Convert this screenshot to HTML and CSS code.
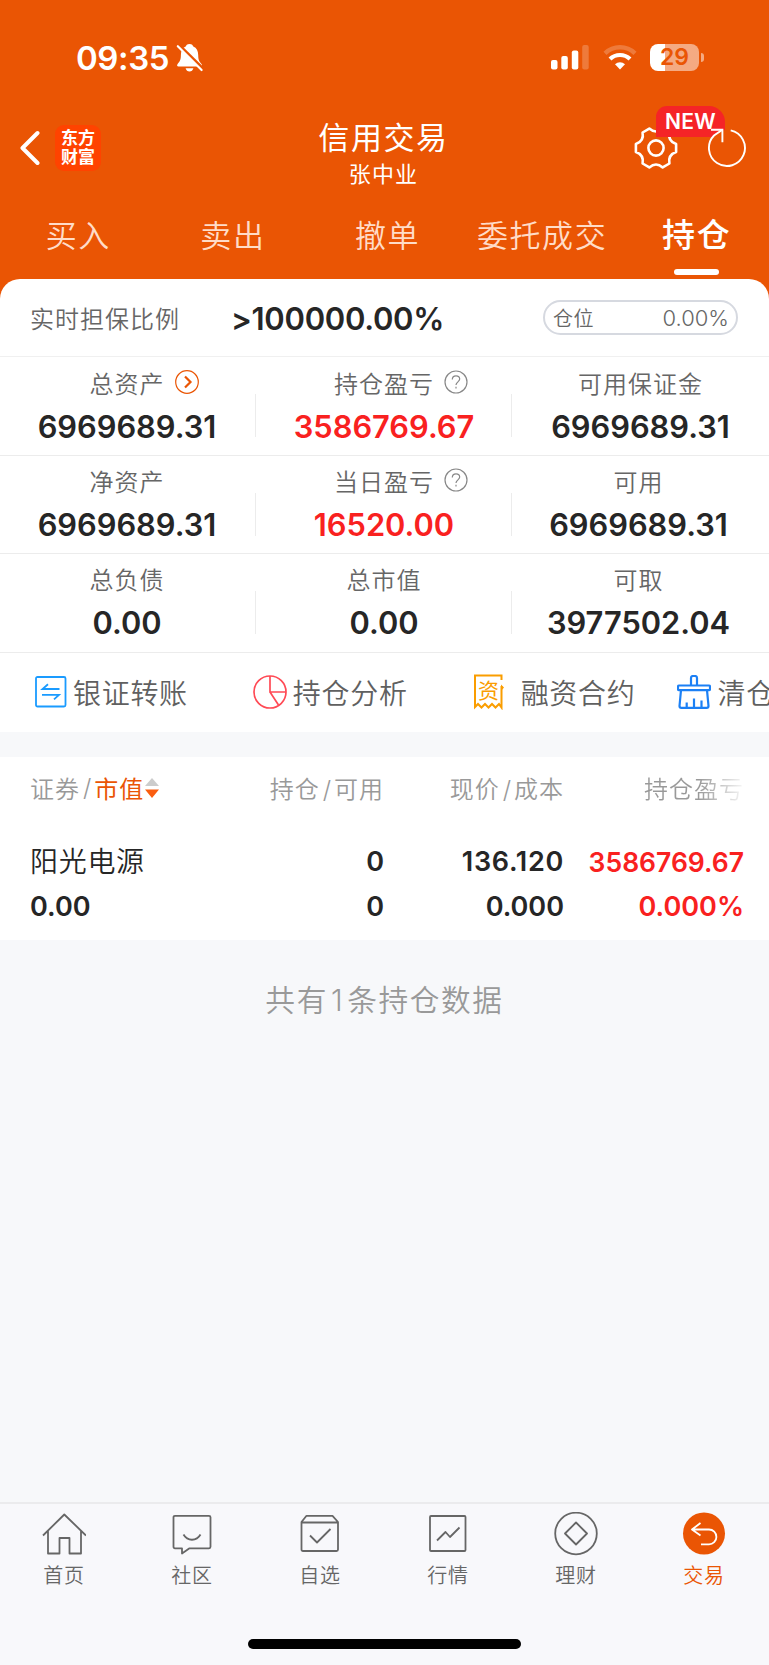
FILE: index.html
```html
<!DOCTYPE html>
<html lang="zh-CN">
<head>
    <meta charset="UTF-8">
    <meta name="viewport" content="width=device-width, initial-scale=1.0">
    <title>信用交易</title>
    <link rel="stylesheet" href="styles.css">
</head>
<body>
    <header>
        <div class="status-bar">
            <div class="status-left">
                <span class="time">09:35</span>
                <svg class="bell" width="28" height="30" viewBox="0 0 28 30">
                    <path d="M13.5 1c-2.4 0-3.4 1.5-3.8 2.4C6.3 4.8 4.9 8 4.9 12c0 5.600-1.600 6.800-3.400 9.200-.8 1.200-.4 2.300 1 2.300h22.200c1.400 0 1.700-1.100.9-2.300-1.900-2.400-3.400-3.600-3.400-9.200 0-4-1.500-7.200-4.900-8.600C16.900 2.500 15.900 1 13.500 1zM9.600 25.200c.5 2 2 3.300 3.900 3.300s3.400-1.300 3.900-3.300z" fill="#fff"/>
                    <path d="M3.300 2.200L28 26.600" stroke="#ea5504" stroke-width="3"/>
                    <path d="M1.800 3.200L25.600 27" stroke="#fff" stroke-width="2.200" stroke-linecap="round"/>
                </svg>
            </div>
            <div class="status-right">
                <svg width="38" height="25" viewBox="0 0 38 25" fill="#fff">
                    <rect x="0" y="15" width="6.500" height="9.500" rx="2"/>
                    <rect x="10.300" y="11" width="6.500" height="13.500" rx="2"/>
                    <rect x="20.800" y="5.500" width="6.500" height="19" rx="2"/>
                    <rect x="31.200" y="0" width="6.500" height="24.500" rx="2" opacity=".22"/>
                </svg>
                <svg class="wifi" width="34" height="25" viewBox="0 0 34 25" fill="none">
                    <path d="M2 8.400a21.500 21.500 0 0 1 30 0" stroke="#fff" stroke-width="4.400" opacity=".22"/>
                    <path d="M7 14a14.500 14.500 0 0 1 20 0" stroke="#fff" stroke-width="4.200"/>
                    <path d="M17 24.500l-5-5.200a7.300 7.300 0 0 1 10 0z" fill="#fff"/>
                </svg>
                <div class="battery"><span>29</span></div>
                <i class="battery-tip"></i>
            </div>
        </div>

        <div class="nav-bar">
            <div class="nav-left">
                <svg width="20" height="36" viewBox="0 0 20 36" fill="none" stroke="#fff" stroke-width="4" stroke-linecap="round" stroke-linejoin="round">
                    <path d="M17.500 3L2.500 18l15 15"/>
                </svg>
                <div class="logo">东方<br>财富</div>
            </div>
            <div class="nav-title">
                <h1>信用交易</h1>
                <p>张中业</p>
            </div>
            <div class="nav-right">
                <div class="settings">
                    <svg width="44" height="44" viewBox="-22 -22 44 44" fill="none" stroke="#fff" stroke-width="2.600" stroke-linejoin="round">
                        <path d="M20.100 3.900Q11.800 6.800 13.400 15.500L6.700 19.400Q0 13.600-6.700 19.400L-13.400 15.500Q-11.800 6.800-20.100 3.900V-3.900Q-11.800-6.800-13.400-15.500L-6.700-19.400Q0-13.600 6.700-19.400L13.400-15.500Q11.800-6.800 20.100-3.900Z"/>
                        <circle r="7.600"/>
                    </svg>
                    <span class="badge">NEW</span>
                </div>
                <svg class="refresh" width="40" height="42" viewBox="0 0 40 42" fill="none" stroke="#fff" stroke-width="1.900">
                    <circle cx="20" cy="21" r="18" fill="#ea5504" stroke="none"/>
                    <path d="M23.700 3.400A18 18 0 1 1 7 8.500L15.400 2.700"/>
                    <path d="M4 2.700h11.400v12.500"/>
                </svg>
            </div>
        </div>

        <nav class="tabs">
            <a>买入</a>
            <a>卖出</a>
            <a>撤单</a>
            <a>委托成交</a>
            <a class="active">持仓</a>
        </nav>
    </header>

    <main>
        <section class="assets">
            <div class="ratio">
                <span class="ratio-label">实时担保比例</span>
                <strong>&gt;100000.00%</strong>
                <div class="pill"><span>仓位</span><span class="pill-num">0.00%</span></div>
            </div>
            <div class="row top">
                <div class="cell">
                    <div class="label">总资产
                        <svg width="24" height="24" viewBox="0 0 24 24" fill="none" stroke="#ea5504"><circle cx="12" cy="12" r="11.300" stroke-width="1.200"/><path d="M10 6.500l5.500 5.500-5.500 5.500" stroke-width="2.200"/></svg>
                    </div>
                    <div class="value">6969689.31</div>
                </div>
                <div class="cell">
                    <div class="label">持仓盈亏
                        <svg width="24" height="24" viewBox="0 0 24 24" fill="none" stroke="#888" stroke-width="1.200"><circle cx="12" cy="12" r="11"/><path d="M8.300 9.500c0-2.200 1.600-3.700 3.700-3.700s3.700 1.400 3.700 3.300c0 2.700-3.700 2.900-3.700 6"/><path d="M12 16.800v1.800"/></svg>
                    </div>
                    <div class="value red">3586769.67</div>
                </div>
                <div class="cell">
                    <div class="label">可用保证金</div>
                    <div class="value">6969689.31</div>
                </div>
            </div>
            <div class="row">
                <div class="cell">
                    <div class="label">净资产</div>
                    <div class="value">6969689.31</div>
                </div>
                <div class="cell">
                    <div class="label">当日盈亏
                        <svg width="24" height="24" viewBox="0 0 24 24" fill="none" stroke="#888" stroke-width="1.200"><circle cx="12" cy="12" r="11"/><path d="M8.300 9.500c0-2.200 1.600-3.700 3.700-3.700s3.700 1.400 3.700 3.300c0 2.700-3.700 2.900-3.700 6"/><path d="M12 16.800v1.800"/></svg>
                    </div>
                    <div class="value red">16520.00</div>
                </div>
                <div class="cell">
                    <div class="label">可用</div>
                    <div class="value">6969689.31</div>
                </div>
            </div>
            <div class="row">
                <div class="cell">
                    <div class="label">总负债</div>
                    <div class="value">0.00</div>
                </div>
                <div class="cell">
                    <div class="label">总市值</div>
                    <div class="value">0.00</div>
                </div>
                <div class="cell">
                    <div class="label">可取</div>
                    <div class="value">3977502.04</div>
                </div>
            </div>
            <div class="actions">
                <a>
                    <svg width="32" height="32" viewBox="0 0 32 32" fill="none" stroke="#1a9bff" stroke-width="1.800">
                        <rect x="1" y="1" width="29.500" height="29.500" rx="1.500"/>
                        <path d="M24.500 13H7.500l5.500-4.800M7 18.800h17l-5 4.600"/>
                    </svg>
                    银证转账
                </a>
                <a>
                    <svg width="34" height="34" viewBox="0 0 34 34" fill="none" stroke="#ff4a55" stroke-width="1.700">
                        <circle cx="17" cy="17" r="16"/>
                        <path d="M17 1v16h16M17 17l8.500 13"/>
                    </svg>
                    持仓分析
                </a>
                <a>
                    <svg width="32" height="36" viewBox="0 0 32 36" fill="none" stroke="#fa9d00" stroke-width="2">
                        <path d="M28.500 6V1.500H2V33l3-3 3.500 3.500L12 30l3.500 3.500L19 30l3.500 3.500L26 30l2.500 3.500V12"/>
                        <path d="M28 10.500l3 3-3 3.500z" fill="#fa9d00" stroke="none"/>
                        <text x="15.500" y="23.500" text-anchor="middle" font-size="21" font-weight="400" letter-spacing="0" fill="#fa9d00" stroke="none">资</text>
                    </svg>
                    融资合约
                </a>
                <a>
                    <svg width="34" height="34" viewBox="0 0 34 34" fill="none" stroke="#1c80f5" stroke-width="2.200" stroke-linejoin="round">
                        <path d="M14 10.500V3q0-2 2-2h2q2 0 2 2v7.500"/>
                        <rect x="1" y="10.500" width="32" height="4.600" rx="1"/>
                        <path d="M4 15.100L2.500 31q0 1.800 1.800 1.800h25.400q1.800 0 1.800-1.800L30 15.100M9.700 32.500v-5M17 32.500v-9M24.500 32.500v-7"/>
                    </svg>
                    清仓
                </a>
            </div>
        </section>

        <section class="holdings">
            <div class="line head">
                <span>证券<i>/</i><b>市值</b><svg width="16" height="22" viewBox="0 0 16 22"><path d="M8 1l7 8H1z" fill="#ccc"/><path d="M1 12.500h14l-7 8.500z" fill="#fa5d10"/></svg></span>
                <span>持仓<i>/</i>可用</span>
                <span>现价<i>/</i>成本</span>
                <span class="fade">持仓盈亏</span>
            </div>
            <div class="line first">
                <span class="name">阳光电源</span>
                <span>0</span>
                <span class="price">136.120</span>
                <span class="red profit">3586769.67</span>
            </div>
            <div class="line">
                <span>0.00</span>
                <span>0</span>
                <span>0.000</span>
                <span class="red">0.000%</span>
            </div>
        </section>
        <p class="total">共有<i>1</i>条持仓数据</p>
    </main>

    <footer>
        <div class="tab-bar">
            <a>
                <svg viewBox="0 0 44 44"><path d="M1 23.500L22.300 2.500 44 23.500M6 19v22.500h11.500V26h10v15.500H39V19"/></svg>
                首页
            </a>
            <a>
                <svg viewBox="0 0 44 44"><path d="M5 3.800h34q1.500 0 1.500 1.500v29.500q0 1.500-1.500 1.500H19.500L12 41.500v-5.200H5q-1.500 0-1.500-1.500V5.300q0-1.500 1.500-1.500zM13.500 22.500c4 7 13 7 17 0"/></svg>
                社区
            </a>
            <a>
                <svg viewBox="0 0 44 44"><path d="M3.500 10l5-6.200h26L40 10v27.500q0 1.500-1.500 1.500H5q-1.500 0-1.500-1.500zM3.500 10.500H40M12 23.500l7 7 13.500-13.500"/></svg>
                自选
            </a>
            <a>
                <svg viewBox="0 0 44 44"><rect x="4" y="4" width="35.500" height="35" rx="1"/><path d="M11 28.500l8.500-8.500 4.500 5 9.500-9.500"/></svg>
                行情
            </a>
            <a>
                <svg viewBox="0 0 44 44"><circle cx="22" cy="21.500" r="20.800"/><path d="M22 10.500l11 11-11 11-11-11z"/></svg>
                理财
            </a>
            <a class="active">
                <svg viewBox="0 0 44 44"><circle cx="22" cy="21.500" r="21" fill="#ea5504" stroke="none"/><path d="M18.500 11l-8.500 6.500 8.500 6M10.500 17.500H27a7.200 7.200 0 0 1 0 14.800h-8" stroke="#fff"/></svg>
                交易
            </a>
        </div>
        <div class="home-indicator"></div>
    </footer>
</body>
</html>
```

FILE: styles.css
```css
* {
    margin: 0;
    padding: 0;
    box-sizing: border-box;
}

body {
    width: 769px;
    height: 1665px;
    display: flex;
    flex-direction: column;
    overflow: hidden;
    background: #f7f8fa;
    color: #262626;
    font-family: Inter, "Noto Sans CJK SC", sans-serif;
    font-weight: 350;
}

svg {
    display: block;
    flex: none;
}

i {
    font-style: normal;
}

/* Header */
header {
    height: 279px;
    background: #ea5504;
    color: #fff;
}

.status-bar {
    height: 95px;
    padding: 20px 65px 0 76px;
    display: flex;
    justify-content: space-between;
    align-items: center;
}

.status-left,
.status-right {
    display: flex;
    align-items: center;
}

.time {
    width: 100px;
    font-size: 33px;
    font-weight: 600;
    letter-spacing: -0.4px;
}

.wifi {
    margin: 0 13px 0 14px;
}

.battery {
    width: 49px;
    height: 27px;
    border-radius: 8px;
    background: linear-gradient(90deg, #fff 15px, rgba(255, 255, 255, 0.5) 15px);
    color: #ea5504;
    font-size: 23px;
    font-weight: 600;
    line-height: 27px;
    text-align: center;
}

.battery-tip {
    width: 3px;
    height: 9px;
    margin-left: 2px;
    border-radius: 0 4px 4px 0;
    background: rgba(255, 255, 255, 0.5);
}

.nav-bar {
    height: 105px;
    padding: 0 22px 0 20px;
    display: grid;
    grid-template-columns: 1fr auto 1fr;
}

.nav-left {
    display: flex;
    align-items: center;
    gap: 15px;
}

.logo {
    width: 46px;
    height: 46px;
    padding-top: 4px;
    border-radius: 9px;
    background: #ff4300;
    font-size: 17px;
    font-weight: 700;
    line-height: 19px;
    text-align: center;
}

.nav-title {
    padding-top: 20px;
    text-align: center;
}

.nav-title h1 {
    font-size: 31px;
    font-weight: 400;
    line-height: 45px;
    letter-spacing: 1.6px;
}

.nav-title p {
    font-size: 22px;
    font-weight: 400;
    line-height: 28px;
    letter-spacing: 1.2px;
}

.nav-right {
    display: flex;
    justify-content: flex-end;
    align-items: center;
    gap: 29px;
}

.settings {
    position: relative;
}

.badge {
    position: absolute;
    left: 22px;
    top: -20px;
    width: 69px;
    height: 31px;
    border-radius: 11px 16px 8px 0;
    background: #f52427;
    font-size: 21px;
    font-weight: 600;
    line-height: 31px;
    letter-spacing: 0.3px;
    text-align: center;
}

.refresh {
    position: relative;
}

.tabs {
    height: 79px;
    margin-right: -4px;
    display: flex;
    font-size: 31px;
    letter-spacing: 1.6px;
    color: #ffdcc8;
}

.tabs a {
    flex: 1;
    padding-left: 2px;
    display: flex;
    flex-direction: column;
    align-items: center;
    line-height: 71px;
}

.tabs .active {
    color: #fff;
    font-size: 33px;
    font-weight: 500;
}

.tabs .active::after {
    content: "";
    width: 45px;
    height: 6px;
    margin-top: -2px;
    border-radius: 3px;
    background: #fff;
}

/* Assets */
main {
    flex: 1;
    background: linear-gradient(#ea5504 40px, #f7f8fa 40px);
}

.assets {
    height: 453px;
    border-radius: 20px 20px 0 0;
    background: #fff;
    overflow: hidden;
}

.ratio {
    height: 78px;
    padding: 0 31px 0 30px;
    display: flex;
    align-items: center;
    border-bottom: 1px solid #f0f0f0;
}

.ratio-label {
    width: 201px;
    font-size: 24px;
    letter-spacing: 1px;
    color: #666;
}

.ratio strong {
    flex: 1;
    padding-top: 2px;
    font-size: 31px;
    font-weight: 600;
    letter-spacing: -0.3px;
}

.pill {
    width: 195px;
    height: 35px;
    padding: 0 7px 0 8px;
    display: flex;
    justify-content: space-between;
    align-items: center;
    border: 2px solid #d6d9e0;
    border-radius: 18px;
    font-size: 20px;
    letter-spacing: 0.6px;
    color: #666;
}

.pill-num {
    font-size: 22px;
    letter-spacing: 0;
}

.row {
    height: 98.6px;
    display: grid;
    grid-template-columns: 256px 256px 1fr;
    border-bottom: 1px solid #ececec;
}

.cell {
    padding-top: 9px;
    display: flex;
    flex-direction: column;
    align-items: center;
    background: linear-gradient(#ececec, #ececec) no-repeat right 37px / 1px 43px;
}

.cell:first-child {
    padding-right: 2px;
}

.cell:last-child {
    padding-right: 4px;
    background: none;
}

.top .cell {
    padding-top: 10px;
}

.top .cell:last-child {
    padding-right: 0;
}

.label {
    position: relative;
    font-size: 24px;
    line-height: 36px;
    letter-spacing: 1px;
    color: #666;
}

.label svg {
    position: absolute;
    left: calc(100% + 10px);
    top: 3px;
}

.value {
    font-size: 30.8px;
    font-weight: 600;
    line-height: 48px;
}

.red {
    color: #f9211f;
}

.actions {
    height: 78px;
    padding-left: 35px;
    display: flex;
    align-items: center;
    gap: 65px;
    font-size: 28px;
    letter-spacing: 0.7px;
    color: #606060;
    white-space: nowrap;
}

.actions a {
    display: flex;
    align-items: center;
    gap: 6px;
}

.actions a:nth-child(3) {
    gap: 16px;
}

.actions a:nth-child(4) {
    margin-left: -23px;
}

/* Holdings */
.holdings {
    height: 183px;
    margin-top: 25px;
    padding: 0 25px 0 30px;
    background: #fff;
}

.line {
    height: 45px;
    display: grid;
    grid-template-columns: 201px 153px 180px 180px;
    align-items: center;
    text-align: right;
    font-size: 27px;
    font-weight: 600;
}

.line span:first-child {
    text-align: left;
}

.line .name {
    margin-top: -3px;
    font-size: 28px;
    font-weight: 350;
    letter-spacing: 0.7px;
}

.line .price {
    letter-spacing: 0.7px;
}

.line .profit {
    font-size: 26.5px;
}

.line.head {
    height: 61px;
    font-size: 24px;
    font-weight: 350;
    letter-spacing: 1px;
    color: #999;
}

.head i {
    padding: 0 2px 0 3px;
}

.head span:first-child {
    display: flex;
    align-items: center;
}

.head b {
    font-weight: 400;
    color: #ea5504;
}

.line.first {
    margin-top: 21px;
}

.fade {
    background: linear-gradient(90deg, #999 75%, #fff 102%);
    background-clip: text;
    color: transparent;
}

.total {
    margin-top: 38px;
    font-size: 29.7px;
    line-height: 44px;
    letter-spacing: 1.6px;
    text-align: center;
    color: #999;
}

.total i {
    padding: 0 3px;
}

/* Bottom tab bar */
footer {
    height: 163px;
    border-top: 2px solid #ebebed;
    background: #f8f8fb;
}

.tab-bar {
    height: 135px;
    padding: 8px 1px 0 0;
    display: flex;
}

.tab-bar a {
    flex: 1;
    display: flex;
    flex-direction: column;
    align-items: center;
    font-size: 20px;
    line-height: 40px;
    letter-spacing: 0.8px;
    color: #666;
}

.tab-bar .active {
    color: #ea5504;
}

.tab-bar svg {
    width: 44px;
    height: 44px;
    fill: none;
    stroke: #666;
    stroke-width: 1.8;
    stroke-linejoin: round;
}

.home-indicator {
    width: 273px;
    height: 10px;
    margin: 0 auto;
    border-radius: 5px;
    background: #000;
}
```
